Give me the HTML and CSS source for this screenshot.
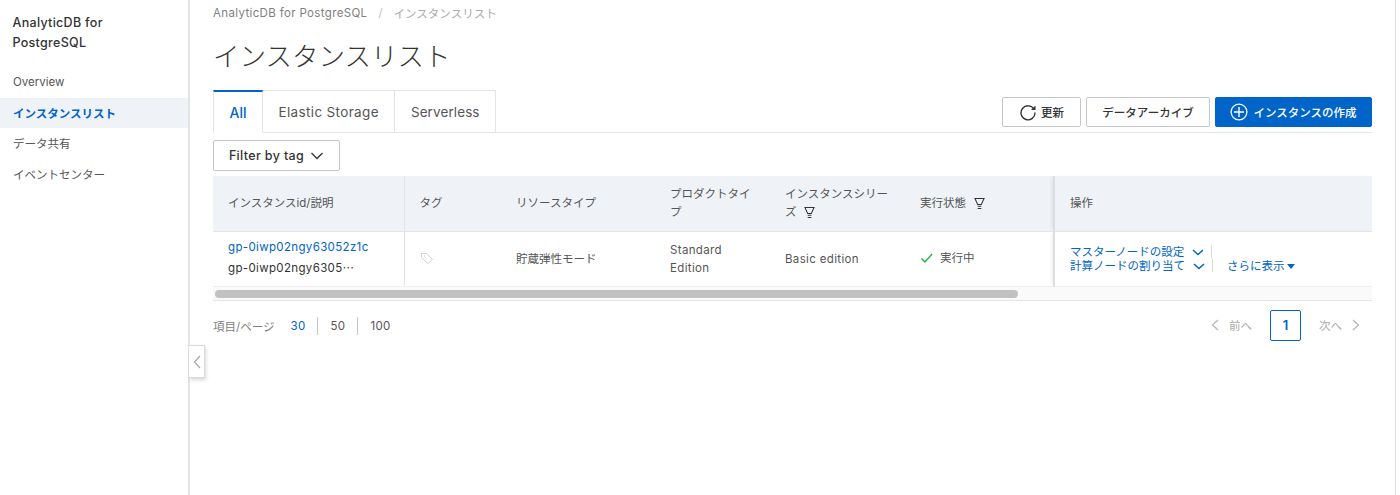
FILE: index.html
```html
<!DOCTYPE html>
<html lang="ja">
<head>
<meta charset="utf-8">
<title>インスタンスリスト</title>
<link rel="stylesheet" href="styles.css">
</head>
<body>
<div class="app">
  <nav class="side">
    <div class="brand">AnalyticDB for PostgreSQL</div>
    <a class="item">Overview</a>
    <a class="item active">インスタンスリスト</a>
    <a class="item">データ共有</a>
    <a class="item">イベントセンター</a>
  </nav>
  <button class="collapse" aria-label="collapse"><svg width="8" height="14" viewBox="0 0 8 14"><path d="M7 1 1.500 7 7 13" fill="none" stroke="#a8a8a8" stroke-width="1.200"/></svg></button>
  <main class="main">
    <div class="crumbs"><span class="lat">AnalyticDB for PostgreSQL</span><span class="sep">/</span><span class="cur">インスタンスリスト</span></div>
    <h1 class="title">インスタンスリスト</h1>
    <div class="tabbar">
      <div class="tabs">
        <a class="tab on">All</a>
        <a class="tab lat">Elastic Storage</a>
        <a class="tab lat">Serverless</a>
      </div>
      <div class="actions">
        <button class="btn refresh"><svg width="18" height="18" viewBox="0 0 18 18"><path d="M15 6.200A7 7 0 1 0 16 9.500" fill="none" stroke="#333" stroke-width="1.400"/><path d="M16.500 2.500V7h-4.500z" fill="#333"/></svg>更新</button>
        <button class="btn archive">データアーカイブ</button>
        <button class="btn primary"><svg width="18" height="18" viewBox="0 0 18 18"><circle cx="9" cy="9" r="7.900" fill="none" stroke="#fff" stroke-width="1.300"/><path d="M9 4v10M4 9h10" stroke="#fff" stroke-width="1.400"/></svg>インスタンスの作成</button>
      </div>
    </div>
    <button class="btn filter lat">Filter by tag<svg width="14" height="8" viewBox="0 0 14 8"><path d="M1.500 1 7 6.500 12.500 1" fill="none" stroke="#333" stroke-width="1.300"/></svg></button>
    <div class="tablewrap">
      <table class="grid">
        <colgroup><col class="c1"><col class="c2"><col class="c3"><col class="c4"><col class="c5"><col class="c6"><col class="c7"></colgroup>
        <thead>
          <tr>
            <th class="div">インスタンスid/説明</th>
            <th>タグ</th>
            <th>リソースタイプ</th>
            <th>プロダクトタイプ</th>
            <th>インスタンスシリーズ <svg class="funnel" width="11" height="13" viewBox="0 0 12 13"><path d="M1 1h10L8 7.500H4zM4 9.500h4M4 12h4" fill="none" stroke="#333" stroke-width="1.100"/></svg></th>
            <th>実行状態 <svg class="funnel gap" width="11" height="13" viewBox="0 0 12 13"><path d="M1 1h10L8 7.500H4zM4 9.500h4M4 12h4" fill="none" stroke="#333" stroke-width="1.100"/></svg></th>
            <th class="fixed">操作</th>
          </tr>
        </thead>
        <tbody>
          <tr>
            <td class="div lat idcell"><a class="link">gp-0iwp02ngy63052z1c</a><div class="desc">gp-0iwp02ngy6305<span class="ell">…</span></div></td>
            <td><svg class="tag" width="14" height="14" viewBox="0 0 14 14"><path d="M1.500 2.500h5l6 6-4.500 4-6.500-6z" fill="none" stroke="#cfd1d6"/><circle cx="4.500" cy="5" r=".8" fill="#cfd1d6"/></svg></td>
            <td>貯蔵弾性モード</td>
            <td class="lat">Standard Edition</td>
            <td class="lat">Basic edition</td>
            <td><span class="state"><svg width="14" height="12" viewBox="0 0 14 12"><path d="M1.500 6.500 5 10l7-8" fill="none" stroke="#1fb141" stroke-width="1.300"/></svg>実行中</span></td>
            <td class="fixed ops">
              <div class="oprow"><a class="link">マスターノードの設定<svg class="chev" width="12" height="7" viewBox="0 0 12 7"><path d="M1 1l5 4.500L11 1" fill="none" stroke="#0064c8" stroke-width="1.500"/></svg></a><i class="bar"></i></div>
              <div class="oprow"><a class="link">計算ノードの割り当て<svg class="chev" width="12" height="7" viewBox="0 0 12 7"><path d="M1 1l5 4.500L11 1" fill="none" stroke="#0064c8" stroke-width="1.500"/></svg></a><i class="bar"></i><a class="link more">さらに表示<span class="caret"></span></a></div>
            </td>
          </tr>
        </tbody>
      </table>
      <div class="track"><div class="thumb"></div></div>
    </div>
    <div class="pager">
      <div class="sizes">
        <span class="lbl">項目/ページ</span>
        <a class="size cur lat">30</a><a class="size lat">50</a><a class="size lat">100</a>
      </div>
      <div class="pages">
        <span class="nav"><svg width="8" height="12" viewBox="0 0 8 12"><path d="M7 1 1.500 6 7 11" fill="none" stroke="#b5b5b5" stroke-width="1.200"/></svg>前へ</span>
        <span class="page">1</span>
        <span class="nav">次へ<svg width="8" height="12" viewBox="0 0 8 12"><path d="M1 1l5.500 5L1 11" fill="none" stroke="#b5b5b5" stroke-width="1.200"/></svg></span>
      </div>
    </div>
  </main>
</div>
</body>
</html>
```
FILE: styles.css
```css
* { box-sizing: border-box; }
html, body { margin: 0; height: 100%; }
body {
  font-family: Inter, "Noto Sans CJK JP", sans-serif;
  font-size: 11.500px;
  color: #333;
  background: #fff;
  overflow: hidden;
}
.lat { letter-spacing: .35px; }
.app { display: flex; width: 1396px; height: 495px; position: relative; border-right: 1px solid #e3e4e6; }
.side { width: 190px; flex: none; border-right: 2px solid #e3e4e6; padding-top: 13px; }
.brand { padding: 0 12.500px; font-size: 12.500px; font-weight: 500; line-height: 20px; width: 130px; margin-bottom: 14px; color: #333; letter-spacing: .3px; }
.item { display: flex; align-items: center; height: 30.500px; padding-left: 13px; color: #555; }
.item.active { background: #eff3f8; color: #0064c8; font-weight: 700; }
.collapse { position: absolute; left: 189px; top: 345px; width: 16px; height: 33px; padding: 0; background: #fff; border: 1px solid #d8d9db; border-left: 0; box-shadow: 1px 2px 4px rgba(0,0,0,.16); display: flex; align-items: center; justify-content: center; }
.main { flex: 1; min-width: 0; padding: 0 23px 0 23px; }
.crumbs { height: 26px; display: flex; align-items: center; color: #808080; }
.sep { margin: 0 11px; color: #c1c1c1; }
.crumbs .cur { color: #aaa; }
.title { margin: 0; height: 64px; font-size: 26.500px; font-weight: 300; line-height: 60px; color: #333; }
.tabbar { display: flex; justify-content: space-between; height: 43px; border-bottom: 1px solid #e3e4e6; }
.tabs { display: flex; height: 43px; }
.tab { display: flex; align-items: center; padding: 0 15.500px; font-size: 13.500px; color: #555; border: 1px solid #e3e4e6; border-left: 0; }
.tab:last-child { letter-spacing: .1px; }
.tab.on { width: 50px; justify-content: center; padding: 0; font-size: 14px; color: #0064c8; font-weight: 500; border-top: 2px solid #0064c8; border-left: 1px solid #e3e4e6; border-bottom-color: #fff; }
.actions { display: flex; gap: 5px; padding-top: 7px; }
.btn { display: inline-flex; align-items: center; justify-content: center; height: 30px; border: 1px solid #c4c6cc; border-radius: 2px; background: #fff; font: inherit; font-weight: 500; color: #333; padding: 0; }
.refresh { width: 79px; gap: 4px; }
.archive { width: 124px; }
.primary { width: 157px; gap: 5px; background: #0064c8; border-color: #0064c8; color: #fff; }
.filter { width: 127px; height: 31px; margin-top: 7px; gap: 6px; font-size: 12.500px; }
.tablewrap { margin-top: 5px; }
.grid { width: 100%; border-collapse: collapse; table-layout: fixed; }
.c1 { width: 191px; } .c2 { width: 97px; } .c3 { width: 154px; } .c4 { width: 115px; } .c5 { width: 135px; } .c6 { width: 149px; }
th { height: 55px; background: #eff3f8; font-weight: 400; text-align: left; padding: 0 15px; line-height: 18px; border-bottom: 1px solid #e3e4e6; color: #555; }
td { height: 55px; padding: 0 15px; line-height: 18px; color: #555; border-bottom: 1px solid #f0f0f0; }
.div { border-right: 1px solid #e3e4e6; }
.idcell { padding-bottom: 2px; }
.link { color: #0064c8; }
.desc { margin-top: 2px; color: #333; }
.ell { font-family: "Noto Sans CJK JP", sans-serif; letter-spacing: 0; }
.tag { vertical-align: -2px; }
.funnel { vertical-align: -3px; margin-left: 4px; }
.funnel.gap { margin-left: 5px; }
.state { display: inline-flex; align-items: center; gap: 6px; }
.fixed { border-left: 2px solid #dcdee2; box-shadow: -3px 0 4px -2px rgba(0,0,0,.14); }
.ops { line-height: 14px; }
.oprow { display: flex; align-items: center; }
.chev { margin-left: 8px; }
.bar { width: 1px; height: 13px; background: #d8d9db; margin-left: 7px; }
.more { margin-left: 14px; }
.caret { display: inline-block; margin-left: 2px; vertical-align: 1px; border: 4px solid transparent; border-top: 5px solid #0064c8; border-bottom: 0; }
.track { height: 14px; background: #fafafa; border-bottom: 1px solid #e3e4e6; padding: 3px 2px; }
.thumb { width: 803px; height: 8px; border-radius: 4px; background: #c1c1c1; }
.pager { display: flex; justify-content: space-between; align-items: center; height: 31px; margin-top: 9px; }
.sizes { display: flex; align-items: center; padding-top: 1px; }
.lbl { color: #808080; margin-right: 4px; }
.size { padding: 0 12px; height: 18px; line-height: 18px; color: #555; border-left: 1px solid #c4c6cc; }
.size.cur { border-left: 0; color: #0064c8; }
.pages { display: flex; align-items: center; margin-right: 12px; }
.nav { display: inline-flex; align-items: center; gap: 10px; color: #aaa; }
.page { width: 31px; height: 31px; margin: 0 18px; border: 1px solid #0064c8; border-radius: 2px; color: #0064c8; display: flex; align-items: center; justify-content: center; font-weight: 600; font-size: 13px; }
```
